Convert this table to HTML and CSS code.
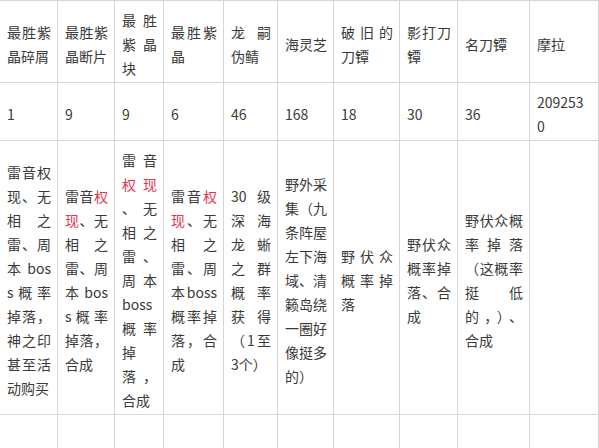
FILE: index.html
```html
<!DOCTYPE html>
<html lang="zh-CN">
<head>
<meta charset="utf-8">
<title>材料表</title>
<link rel="stylesheet" href="styles.css">
</head>
<body>
<table class="mats">
  <colgroup>
    <col class="c58"><col class="c57"><col class="c49"><col class="c60"><col class="c54">
    <col class="c56"><col class="c66"><col class="c58"><col class="c72"><col class="c69">
  </colgroup>
  <tbody>
    <tr class="r-head">
      <td><span class="l">最胜紫</span><span class="l">晶碎屑</span></td>
      <td><span class="l">最胜紫</span><span class="l">晶断片</span></td>
      <td><span class="l">最胜</span><span class="l">紫晶</span><span class="l">块</span></td>
      <td><span class="l">最胜紫</span><span class="l">晶</span></td>
      <td><span class="l">龙嗣</span><span class="l">伪鲭</span></td>
      <td><span class="l">海灵芝</span></td>
      <td><span class="l">破旧的</span><span class="l">刀镡</span></td>
      <td><span class="l">影打刀</span><span class="l">镡</span></td>
      <td><span class="l">名刀镡</span></td>
      <td><span class="l">摩拉</span></td>
    </tr>
    <tr class="r-num">
      <td><span class="l">1</span></td>
      <td><span class="l">9</span></td>
      <td><span class="l">9</span></td>
      <td><span class="l">6</span></td>
      <td><span class="l">46</span></td>
      <td><span class="l">168</span></td>
      <td><span class="l">18</span></td>
      <td><span class="l">30</span></td>
      <td><span class="l">36</span></td>
      <td><span class="l">209253</span><span class="l">0</span></td>
    </tr>
    <tr class="r-src">
      <td><span class="l">雷音权</span><span class="l">现、无</span><span class="l">相之</span><span class="l">雷、周</span><span class="l">本bos</span><span class="l">s概率</span><span class="l">掉落，</span><span class="l">神之印</span><span class="l">甚至活</span><span class="l">动购买</span></td>
      <td><span class="l">雷音<em class="hl">权</em></span><span class="l"><em class="hl">现</em>、无</span><span class="l">相之</span><span class="l">雷、周</span><span class="l">本bos</span><span class="l">s概率</span><span class="l">掉落，</span><span class="l">合成</span></td>
      <td><span class="l">雷音</span><span class="l"><em class="hl">权现</em></span><span class="l">、无</span><span class="l">相之</span><span class="l">雷、</span><span class="l">周本</span><span class="l">boss</span><span class="l">概率</span><span class="l">掉</span><span class="l">落，</span><span class="l">合成</span></td>
      <td><span class="l">雷音<em class="hl">权</em></span><span class="l"><em class="hl">现</em>、无</span><span class="l">相之</span><span class="l">雷、周</span><span class="l">本boss</span><span class="l">概率掉</span><span class="l">落，合</span><span class="l">成</span></td>
      <td><span class="l">30级</span><span class="l">深海</span><span class="l">龙蜥</span><span class="l">之群</span><span class="l">概率</span><span class="l">获得</span><span class="l">（1至</span><span class="l">3个）</span></td>
      <td><span class="l">野外采</span><span class="l">集（九</span><span class="l">条阵屋</span><span class="l">左下海</span><span class="l">域、清</span><span class="l">籁岛绕</span><span class="l">一圈好</span><span class="l">像挺多</span><span class="l">的）</span></td>
      <td><span class="l">野伏众</span><span class="l">概率掉</span><span class="l">落</span></td>
      <td><span class="l">野伏众</span><span class="l">概率掉</span><span class="l">落、合</span><span class="l">成</span></td>
      <td><span class="l">野伏众概</span><span class="l">率掉落</span><span class="l">（这概率</span><span class="l">挺低</span><span class="l">的，）、</span><span class="l">合成</span></td>
      <td></td>
    </tr>
    <tr class="r-empty">
      <td></td><td></td><td></td><td></td><td></td>
      <td></td><td></td><td></td><td></td><td></td>
    </tr>
  </tbody>
</table>
</body>
</html>
```

FILE: styles.css
```css
html, body {
  margin: 0;
  padding: 0;
  background: #ffffff;
  overflow: hidden;
}

.mats {
  border-collapse: collapse;
  table-layout: fixed;
  width: 600px;
  margin-left: -1px;
  font-family: "Noto Sans CJK SC", "Noto Sans", sans-serif;
  font-size: 14px;
  line-height: 24px;
  color: #3a3a3a;
}

.c49 { width: 49px; }
.c54 { width: 54px; }
.c56 { width: 56px; }
.c57 { width: 57px; }
.c58 { width: 58px; }
.c60 { width: 60px; }
.c66 { width: 66px; }
.c69 { width: 69px; }
.c72 { width: 72px; }

.mats td {
  border: 1px solid #d6d6d6;
  padding: 7px 6px 2px 7px;
  vertical-align: middle;
  text-align: left;
}

.l {
  display: block;
  white-space: nowrap;
  text-align: justify;
  text-align-last: justify;
}

.l:last-child {
  text-align-last: auto;
}

.hl {
  font-style: normal;
  color: #e0364f;
}

.r-head td { height: 72px; }
.r-num td { height: 48px; }
.r-empty td { height: 40px; }
```
